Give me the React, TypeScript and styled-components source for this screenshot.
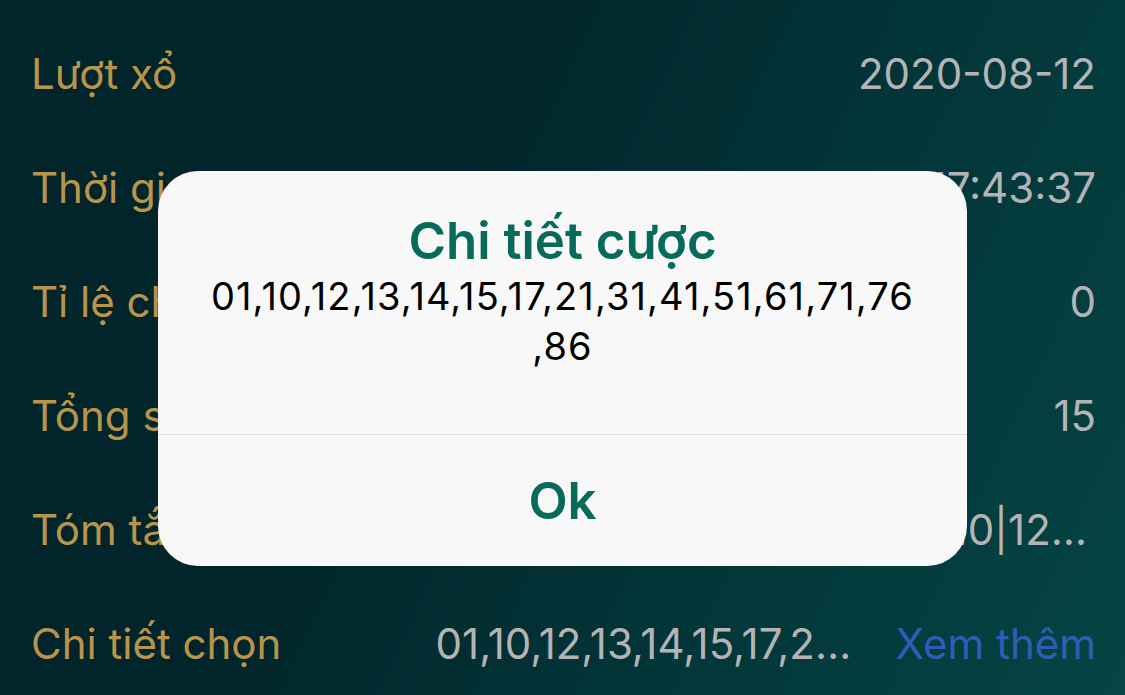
import styled, { createGlobalStyle } from 'styled-components';

const GlobalStyle = createGlobalStyle`
  html, body {
    margin: 0;
    padding: 0;
    width: 1125px;
    height: 695px;
    overflow: hidden;
  }
  body {
    font-family: Inter, Roboto, 'Noto Sans', sans-serif;
  }
`;

const Screen = styled.div`
  position: relative;
  width: 1125px;
  height: 695px;
  overflow: hidden;
  background: linear-gradient(115deg, #02252a 0%, #01252a 35%, #03373a 70%, #064544 100%);
`;

const List = styled.div`
  display: flex;
  flex-direction: column;
  padding: 16px 29px 0 31px;
`;

const Row = styled.div`
  height: 114px;
  display: flex;
  align-items: center;
  justify-content: space-between;
  gap: 40px;
  font-size: 42px;
`;

const Label = styled.span`
  color: #b8954b;
  white-space: nowrap;
  flex-shrink: 0;
`;

const ValueGroup = styled.div`
  display: flex;
  align-items: center;
  gap: 35px;
  min-width: 0;
`;

const Value = styled.span<{ $max?: number }>`
  color: #b4b4b4;
  white-space: nowrap;
  overflow: hidden;
  text-overflow: ellipsis;
  max-width: ${(p) => (p.$max ? `${p.$max}px` : 'none')};
`;

const Link = styled.span`
  color: #2f5db6;
  white-space: nowrap;
`;

const Alert = styled.div`
  position: absolute;
  left: 158px;
  top: 171px;
  width: 809px;
  height: 395px;
  border-radius: 40px;
  background: #f8f8f8;
  display: flex;
  flex-direction: column;
  overflow: hidden;
`;

const AlertBody = styled.div`
  height: 264px;
  box-sizing: border-box;
  padding: 40px 30px 0;
  display: flex;
  flex-direction: column;
  align-items: center;
  text-align: center;
  border-bottom: 1px solid #dcdcdc;
`;

const AlertTitle = styled.div`
  color: #076b5c;
  font-size: 51px;
  font-weight: 600;
  line-height: 60px;
`;

const AlertMessage = styled.div`
  color: #000;
  font-size: 38px;
  letter-spacing: 1.1px;
  line-height: 50px;
  width: 740px;
`;

const AlertButton = styled.div`
  flex: 1;
  display: flex;
  align-items: center;
  justify-content: center;
  color: #076b5c;
  font-size: 51px;
  font-weight: 600;
`;

const rows = [
  { label: 'Lượt xổ', value: '2020-08-12' },
  { label: 'Thời gian', value: '2020-08-12 17:43:37' },
  { label: 'Tỉ lệ chọn', value: '0' },
  { label: 'Tổng số', value: '15' },
  { label: 'Tóm tắt', value: '01|10|12|13|14|15', max: 203 },
];

export default function App() {
  return (
    <>
      <GlobalStyle />
      <Screen>
        <List>
          {rows.map((r) => (
            <Row key={r.label}>
              <Label>{r.label}</Label>
              <Value $max={r.max}>{r.value}</Value>
            </Row>
          ))}
          <Row>
            <Label>Chi tiết chọn</Label>
            <ValueGroup>
              <Value $max={425}>01,10,12,13,14,15,17,21,31,41,51,61,71,76,86</Value>
              <Link>Xem thêm</Link>
            </ValueGroup>
          </Row>
        </List>
        <Alert>
          <AlertBody>
            <AlertTitle>Chi tiết cược</AlertTitle>
            <AlertMessage>
              01,10,12,13,14,15,17,21,31,41,51,61,71,76
              <wbr />
              ,86
            </AlertMessage>
          </AlertBody>
          <AlertButton>Ok</AlertButton>
        </Alert>
      </Screen>
    </>
  );
}
